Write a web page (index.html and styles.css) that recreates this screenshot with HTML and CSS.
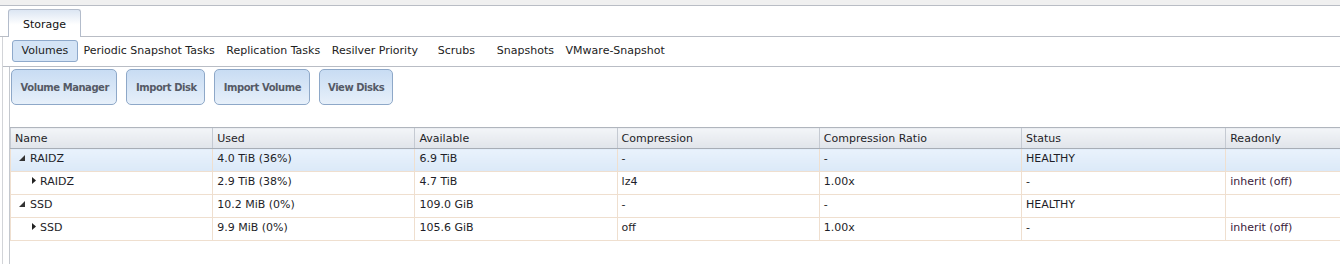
FILE: index.html
```html
<!DOCTYPE html>
<html lang="en">
<head>
    <meta charset="UTF-8">
    <title>Storage</title>
    <link rel="stylesheet" href="styles.css">
</head>
<body>
    <div class="topbar"></div>
    <div class="tabstrip">
        <div class="tab">Storage</div>
    </div>
    <div class="page">
        <div class="subtabs">
            <span class="subtab active">Volumes</span>
            <span class="subtab">Periodic Snapshot Tasks</span>
            <span class="subtab">Replication Tasks</span>
            <span class="subtab">Resilver Priority</span>
            <span class="subtab wide">Scrubs</span>
            <span class="subtab">Snapshots</span>
            <span class="subtab">VMware-Snapshot</span>
        </div>
        <div class="content">
            <div class="actions">
                <div class="button">Volume Manager</div>
                <div class="button">Import Disk</div>
                <div class="button">Import Volume</div>
                <div class="button">View Disks</div>
            </div>
            <table class="grid">
                <colgroup>
                    <col class="c1"><col class="c1"><col class="c1"><col class="c1"><col class="c1"><col class="c2"><col class="c1">
                </colgroup>
                <thead>
                    <tr>
                        <th>Name</th>
                        <th>Used</th>
                        <th>Available</th>
                        <th>Compression</th>
                        <th>Compression Ratio</th>
                        <th>Status</th>
                        <th>Readonly</th>
                    </tr>
                </thead>
                <tbody>
                    <tr class="selected">
                        <td><span class="tree open"><svg width="6" height="6" viewBox="0 0 6 6"><polygon points="0,6 6,6 6,0" fill="#333"/></svg></span>RAIDZ</td>
                        <td>4.0 TiB (36%)</td>
                        <td>6.9 TiB</td>
                        <td>-</td>
                        <td>-</td>
                        <td>HEALTHY</td>
                        <td></td>
                    </tr>
                    <tr>
                        <td><span class="tree child"><svg width="4" height="7" viewBox="0 0 4 7"><polygon points="0,0 4,3.5 0,7" fill="#222"/></svg></span>RAIDZ</td>
                        <td>2.9 TiB (38%)</td>
                        <td>4.7 TiB</td>
                        <td>lz4</td>
                        <td>1.00x</td>
                        <td>-</td>
                        <td class="ro">inherit (off)</td>
                    </tr>
                    <tr>
                        <td><span class="tree open"><svg width="6" height="6" viewBox="0 0 6 6"><polygon points="0,6 6,6 6,0" fill="#333"/></svg></span>SSD</td>
                        <td>10.2 MiB (0%)</td>
                        <td>109.0 GiB</td>
                        <td>-</td>
                        <td>-</td>
                        <td>HEALTHY</td>
                        <td></td>
                    </tr>
                    <tr>
                        <td><span class="tree child"><svg width="4" height="7" viewBox="0 0 4 7"><polygon points="0,0 4,3.5 0,7" fill="#222"/></svg></span>SSD</td>
                        <td>9.9 MiB (0%)</td>
                        <td>105.6 GiB</td>
                        <td>off</td>
                        <td>1.00x</td>
                        <td>-</td>
                        <td class="ro">inherit (off)</td>
                    </tr>
                </tbody>
            </table>
        </div>
    </div>
</body>
</html>
```

FILE: styles.css
```css
body {
    margin: 0;
    font-family: "DejaVu Sans", Verdana, sans-serif;
    font-size: 11px;
    color: #1e1e28;
    background: #fff;
    overflow: hidden;
}
.topbar {
    height: 5px;
    background: #f0f0f0;
    border-bottom: 1px solid #b9bdc5;
}
.tabstrip {
    height: 30px;
    padding-left: 8px;
    border-bottom: 1px solid #b9bdc5;
    display: flex;
    align-items: flex-end;
}
.tab {
    width: 73px;
    height: 28px;
    margin-bottom: -1px;
    box-sizing: border-box;
    border: 1px solid #b3bccb;
    border-bottom: none;
    border-radius: 3px 3px 0 0;
    background: linear-gradient(#dce6f3, #fff 55%);
    color: #111;
    text-align: center;
    line-height: 29px;
}
.page {
    margin-left: 2px;
    border-left: 1px solid #d2d4d8;
}
.subtabs {
    height: 28px;
    padding: 0 0 1px 9px;
    border-bottom: 1px solid #b9bdc5;
    display: flex;
    align-items: center;
    color: #222;
}
.subtab {
    padding: 0 5.8px;
    line-height: 20px;
}
.subtab.active {
    padding: 0 8.5px;
    margin-right: 0;
    background: #d4e4f6;
    border: 1px solid #8ea9cb;
    border-radius: 3px;
}
.subtab.wide {
    padding: 0 16px 0 14px;
}
.content {
    margin-left: 6px;
    border-left: 1px solid #c4c8ce;
    height: 200px;
}
.actions {
    display: flex;
    gap: 9px;
    padding: 2px 0 0 1px;
    height: 58px;
}
.button {
    height: 36px;
    box-sizing: border-box;
    padding: 0 7.5px 0 8.5px;
    line-height: 35px;
    border: 1px solid #8ea8c8;
    border-radius: 5px;
    background: linear-gradient(#c8dcf3, #e7f0fa);
    color: #555a66;
    font-weight: bold;
    font-size: 10px;
    letter-spacing: -0.45px;
}
.grid {
    table-layout: fixed;
    border-collapse: collapse;
    width: 1418px;
}
.grid col.c1 {
    width: 202px;
}
.grid col.c2 {
    width: 204px;
}
.grid th {
    height: 19px;
    padding: 1px 4px 0;
    text-align: left;
    font-weight: normal;
    background: linear-gradient(#f3f5f8, #e0e4ea);
    border-top: 1px solid #b0b5bd;
    border-bottom: 1px solid #a7adb6;
    border-left: 1px solid #c5cad2;
    color: #1e1e28;
}
.grid td {
    height: 19px;
    padding: 3px 4px 0;
    line-height: 13px;
    vertical-align: top;
    border-bottom: 1px solid #efdfcf;
    border-left: 1px solid #efdfcf;
    white-space: nowrap;
}
.grid tr.selected td {
    background: linear-gradient(#e9f2fc, #dbe9f8);
}
.tree {
    display: inline-block;
    vertical-align: middle;
    line-height: 0;
}
.tree.open {
    margin: -2px 5px 0 4px;
}
.tree.child {
    margin: -3px 4px 0 17px;
}
.ro {
    color: #3a1a3a;
}
```
